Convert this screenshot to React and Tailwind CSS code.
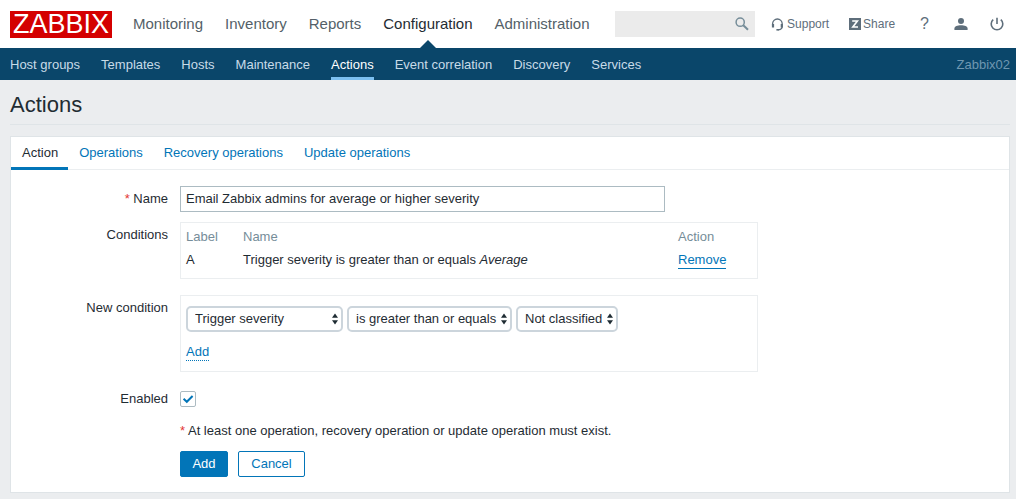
import React from 'react';

const MAIN_NAV = ['Monitoring', 'Inventory', 'Reports', 'Configuration', 'Administration'];
const SUB_NAV = [
  'Host groups',
  'Templates',
  'Hosts',
  'Maintenance',
  'Actions',
  'Event correlation',
  'Discovery',
  'Services',
];
const TABS = ['Action', 'Operations', 'Recovery operations', 'Update operations'];

function SearchIcon() {
  return (
    <svg viewBox="0 0 14 14" className="size-[14px]" fill="none" stroke="currentColor" aria-hidden="true">
      <circle cx="5.2" cy="5.2" r="4.1" strokeWidth="1.5" />
      <path d="M8.3 8.3 L13 12.8" strokeWidth="2" />
    </svg>
  );
}

function HeadsetIcon() {
  return (
    <svg viewBox="0 0 13 13" className="size-[13px]" fill="none" stroke="currentColor" aria-hidden="true">
      <path d="M1.6 7.4 V5.8 a4.7 4.7 0 0 1 9.6 0 V8.4 C11.2 10.6 9.6 11.6 6.8 11.7" strokeWidth="1.3" />
      <path d="M2 6 V9.6 M10.8 6 V9.6" strokeWidth="2.2" />
      <path d="M5.4 11.8 H8" strokeWidth="1.6" />
    </svg>
  );
}

function ShareIcon() {
  return (
    <svg viewBox="0 0 12 12" className="size-[12px]" aria-hidden="true">
      <rect width="12" height="12" fill="currentColor" />
      <path d="M3.2 3 H8.4 L3.8 9 H9" fill="none" stroke="#fff" strokeWidth="1.6" />
    </svg>
  );
}

function UserIcon() {
  return (
    <svg viewBox="0 0 14 14" className="size-[14px]" fill="currentColor" aria-hidden="true">
      <circle cx="7" cy="4" r="3" />
      <path d="M0.4 13 V11.4 C0.4 9.3 3.4 8.2 7 8.2 S13.6 9.3 13.6 11.4 V13 Z" />
    </svg>
  );
}

function PowerIcon() {
  return (
    <svg viewBox="0 0 14 14" className="size-[14px]" fill="none" stroke="currentColor" strokeWidth="1.6" aria-hidden="true">
      <path d="M7 0.8 V7" />
      <path d="M3.2 2.6 A5.8 5.8 0 1 0 10.8 2.6" />
    </svg>
  );
}

function Select({ label, value, className }) {
  return (
    <div className={`relative ${className}`}>
      <select
        aria-label={label}
        defaultValue={value}
        className="block h-[26px] w-full appearance-none rounded-[5px] border-2 border-[#ccd5dc] bg-white pl-[7px] text-[13px] leading-4 text-[#1f2c33]"
      >
        <option>{value}</option>
      </select>
      <svg viewBox="0 0 6 12" className="pointer-events-none absolute top-[7px] right-[5px] h-3 w-[6px]" fill="#1f2c33" aria-hidden="true">
        <path d="M3 0.5 L6 4.8 H0 Z M3 11.5 L6 7.2 H0 Z" />
      </svg>
    </div>
  );
}

function Row({ label, htmlFor, required, className = '', children }) {
  const Tag = htmlFor ? 'label' : 'span';
  return (
    <div className={`flex gap-3 ${className}`}>
      <div className="w-[157px] shrink-0 pt-[5px] text-right">
        {label && (
          <Tag htmlFor={htmlFor}>
            {required && <span className="text-[#e33734]">* </span>}
            {label}
          </Tag>
        )}
      </div>
      <div className="min-w-0 flex-1">{children}</div>
    </div>
  );
}

export default function App() {
  return (
    <div className="min-h-screen bg-[#ebedef] font-['Liberation_Sans',Arial,sans-serif] text-[13px] leading-4 text-[#1f2c33]">
      <header className="bg-white">
        <div className="flex h-12 items-center justify-between pr-3 pl-[10px]">
          <div className="flex items-center gap-[21px]">
            <a href="#home" className="flex h-[27px] w-[102px] items-center justify-center bg-[#d40000] text-[27px] leading-none text-white">
              ZABBIX
            </a>
            <nav className="flex gap-[22px] text-[15px] leading-5">
              {MAIN_NAV.map((item) => {
                const active = item === 'Configuration';
                return (
                  <a key={item} href="#nav" className={`relative py-[14px] ${active ? 'text-[#1f2c33]' : 'text-[#545f68]'}`}>
                    {item}
                    {active && (
                      <svg viewBox="0 0 16 8" className="absolute bottom-0 left-1/2 h-2 w-4 -translate-x-1/2" fill="#0a466a" aria-hidden="true">
                        <path d="M8 0 L16 8 H0 Z" />
                      </svg>
                    )}
                  </a>
                );
              })}
            </nav>
          </div>
          <div className="flex items-center text-[12px] text-[#5e6e7b]">
            <form role="search" className="mr-4 flex h-[26px] w-[140px] items-center bg-[#ebebeb] pr-[6px]">
              <input type="text" aria-label="Search" className="min-w-0 flex-1 bg-transparent px-2 outline-none" />
              <button type="button" aria-label="Search" className="text-[#768d99]">
                <SearchIcon />
              </button>
            </form>
            <a href="#support" className="mr-5 flex items-center gap-[3px]">
              <HeadsetIcon />
              Support
            </a>
            <a href="#share" className="mr-[25px] flex items-center gap-[2px]">
              <ShareIcon />
              Share
            </a>
            <a href="#help" aria-label="Help" className="mr-[25px] text-[16px]">
              ?
            </a>
            <button type="button" aria-label="User profile" className="mr-[22px]">
              <UserIcon />
            </button>
            <button type="button" aria-label="Sign out">
              <PowerIcon />
            </button>
          </div>
        </div>
        <div className="flex h-8 items-stretch justify-between bg-[#0a466a] pr-[6px] pl-[10px] text-[#c8dbe8]">
          <nav className="flex gap-[21px]">
            {SUB_NAV.map((item) => (
              <a
                key={item}
                href="#section"
                className={`border-b-[3px] pt-[9px] ${item === 'Actions' ? 'border-[#7cc0f0] text-white' : 'border-transparent'}`}
              >
                {item}
              </a>
            ))}
          </nav>
          <span className="pt-[9px] text-[#6f97b1]">Zabbix02</span>
        </div>
      </header>

      <main className="pr-[6px] pl-[10px]">
        <h1 className="border-b border-[#dfe4e7] pt-3 pb-[6px] text-[22px] leading-[26px]">Actions</h1>

        <section className="mt-[11px] border border-[#dfe4e7] bg-white pb-[15px]">
          <div role="tablist" className="flex h-[33px] border-b border-[#ebeef0]">
            {TABS.map((tab, i) => (
              <button
                key={tab}
                type="button"
                role="tab"
                aria-selected={i === 0}
                className={`-mb-px border-b-[3px] pt-[2px] pr-[10px] pl-[11px] ${i === 0 ? 'border-[#0275b8] text-[#1f2c33]' : 'border-transparent text-[#0275b8]'}`}
              >
                {tab}
              </button>
            ))}
          </div>

          <form className="pt-4">
            <Row label="Name" htmlFor="name" required>
              <input
                id="name"
                type="text"
                defaultValue="Email Zabbix admins for average or higher severity"
                className="block h-[26px] w-full max-w-[485px] border border-[#acbbc2] bg-white px-[5px] pb-[2px]"
              />
            </Row>

            <Row label="Conditions" className="mt-[10px]">
              <div className="max-w-[578px] border border-[#ebeef0] px-[5px] pt-[3px] pb-[7px]">
                <table className="w-full table-fixed text-left">
                  <thead className="text-[#768d99]">
                    <tr>
                      <th className="h-[22px] w-[57px] font-normal">Label</th>
                      <th className="font-normal">Name</th>
                      <th className="w-[74px] font-normal">Action</th>
                    </tr>
                  </thead>
                  <tbody className="align-top">
                    <tr>
                      <td className="h-[23px] pt-1">A</td>
                      <td className="pt-1">
                        Trigger severity is greater than or equals <em>Average</em>
                      </td>
                      <td className="pt-1">
                        <button type="button" className="block border-b border-[#0275b8] text-[#0275b8]">
                          Remove
                        </button>
                      </td>
                    </tr>
                  </tbody>
                </table>
              </div>
            </Row>

            <Row label="New condition" className="mt-4">
              <div className="max-w-[578px] border border-[#ebeef0] px-[5px] pt-[10px] pb-[10px]">
                <div className="flex gap-1">
                  <Select label="Condition type" value="Trigger severity" className="w-[157px]" />
                  <Select label="Operator" value="is greater than or equals" className="w-[165px]" />
                  <Select label="Severity" value="Not classified" className="w-[102px]" />
                </div>
                <button type="button" className="mt-3 block border-b border-dotted border-[#0275b8] text-[#0275b8]">
                  Add
                </button>
              </div>
            </Row>

            <Row label="Enabled" htmlFor="enabled" className="mt-[14px]">
              <div className="relative mt-[5px] size-4">
                <input
                  id="enabled"
                  type="checkbox"
                  defaultChecked
                  className="peer block size-4 appearance-none rounded-[2px] border border-[#acbbc2] bg-white"
                />
                <svg viewBox="0 0 16 16" className="pointer-events-none absolute inset-0 hidden size-4 peer-checked:block" fill="none" stroke="#0275b8" strokeWidth="2" aria-hidden="true">
                  <path d="M3.6 7.8 L6.8 10.8 L12.6 5" />
                </svg>
              </div>
            </Row>

            <Row className="mt-4">
              <p>
                <span className="text-[#e33734]">*</span> At least one operation, recovery operation or update operation must exist.
              </p>
              <div className="mt-3 flex gap-[10px]">
                <button type="submit" className="h-[26px] w-12 rounded-[2px] border border-[#0275b8] bg-[#0275b8] text-white">
                  Add
                </button>
                <button type="button" className="h-[26px] w-[67px] rounded-[2px] border border-[#0275b8] bg-white text-[#0275b8]">
                  Cancel
                </button>
              </div>
            </Row>
          </form>
        </section>
      </main>
    </div>
  );
}
